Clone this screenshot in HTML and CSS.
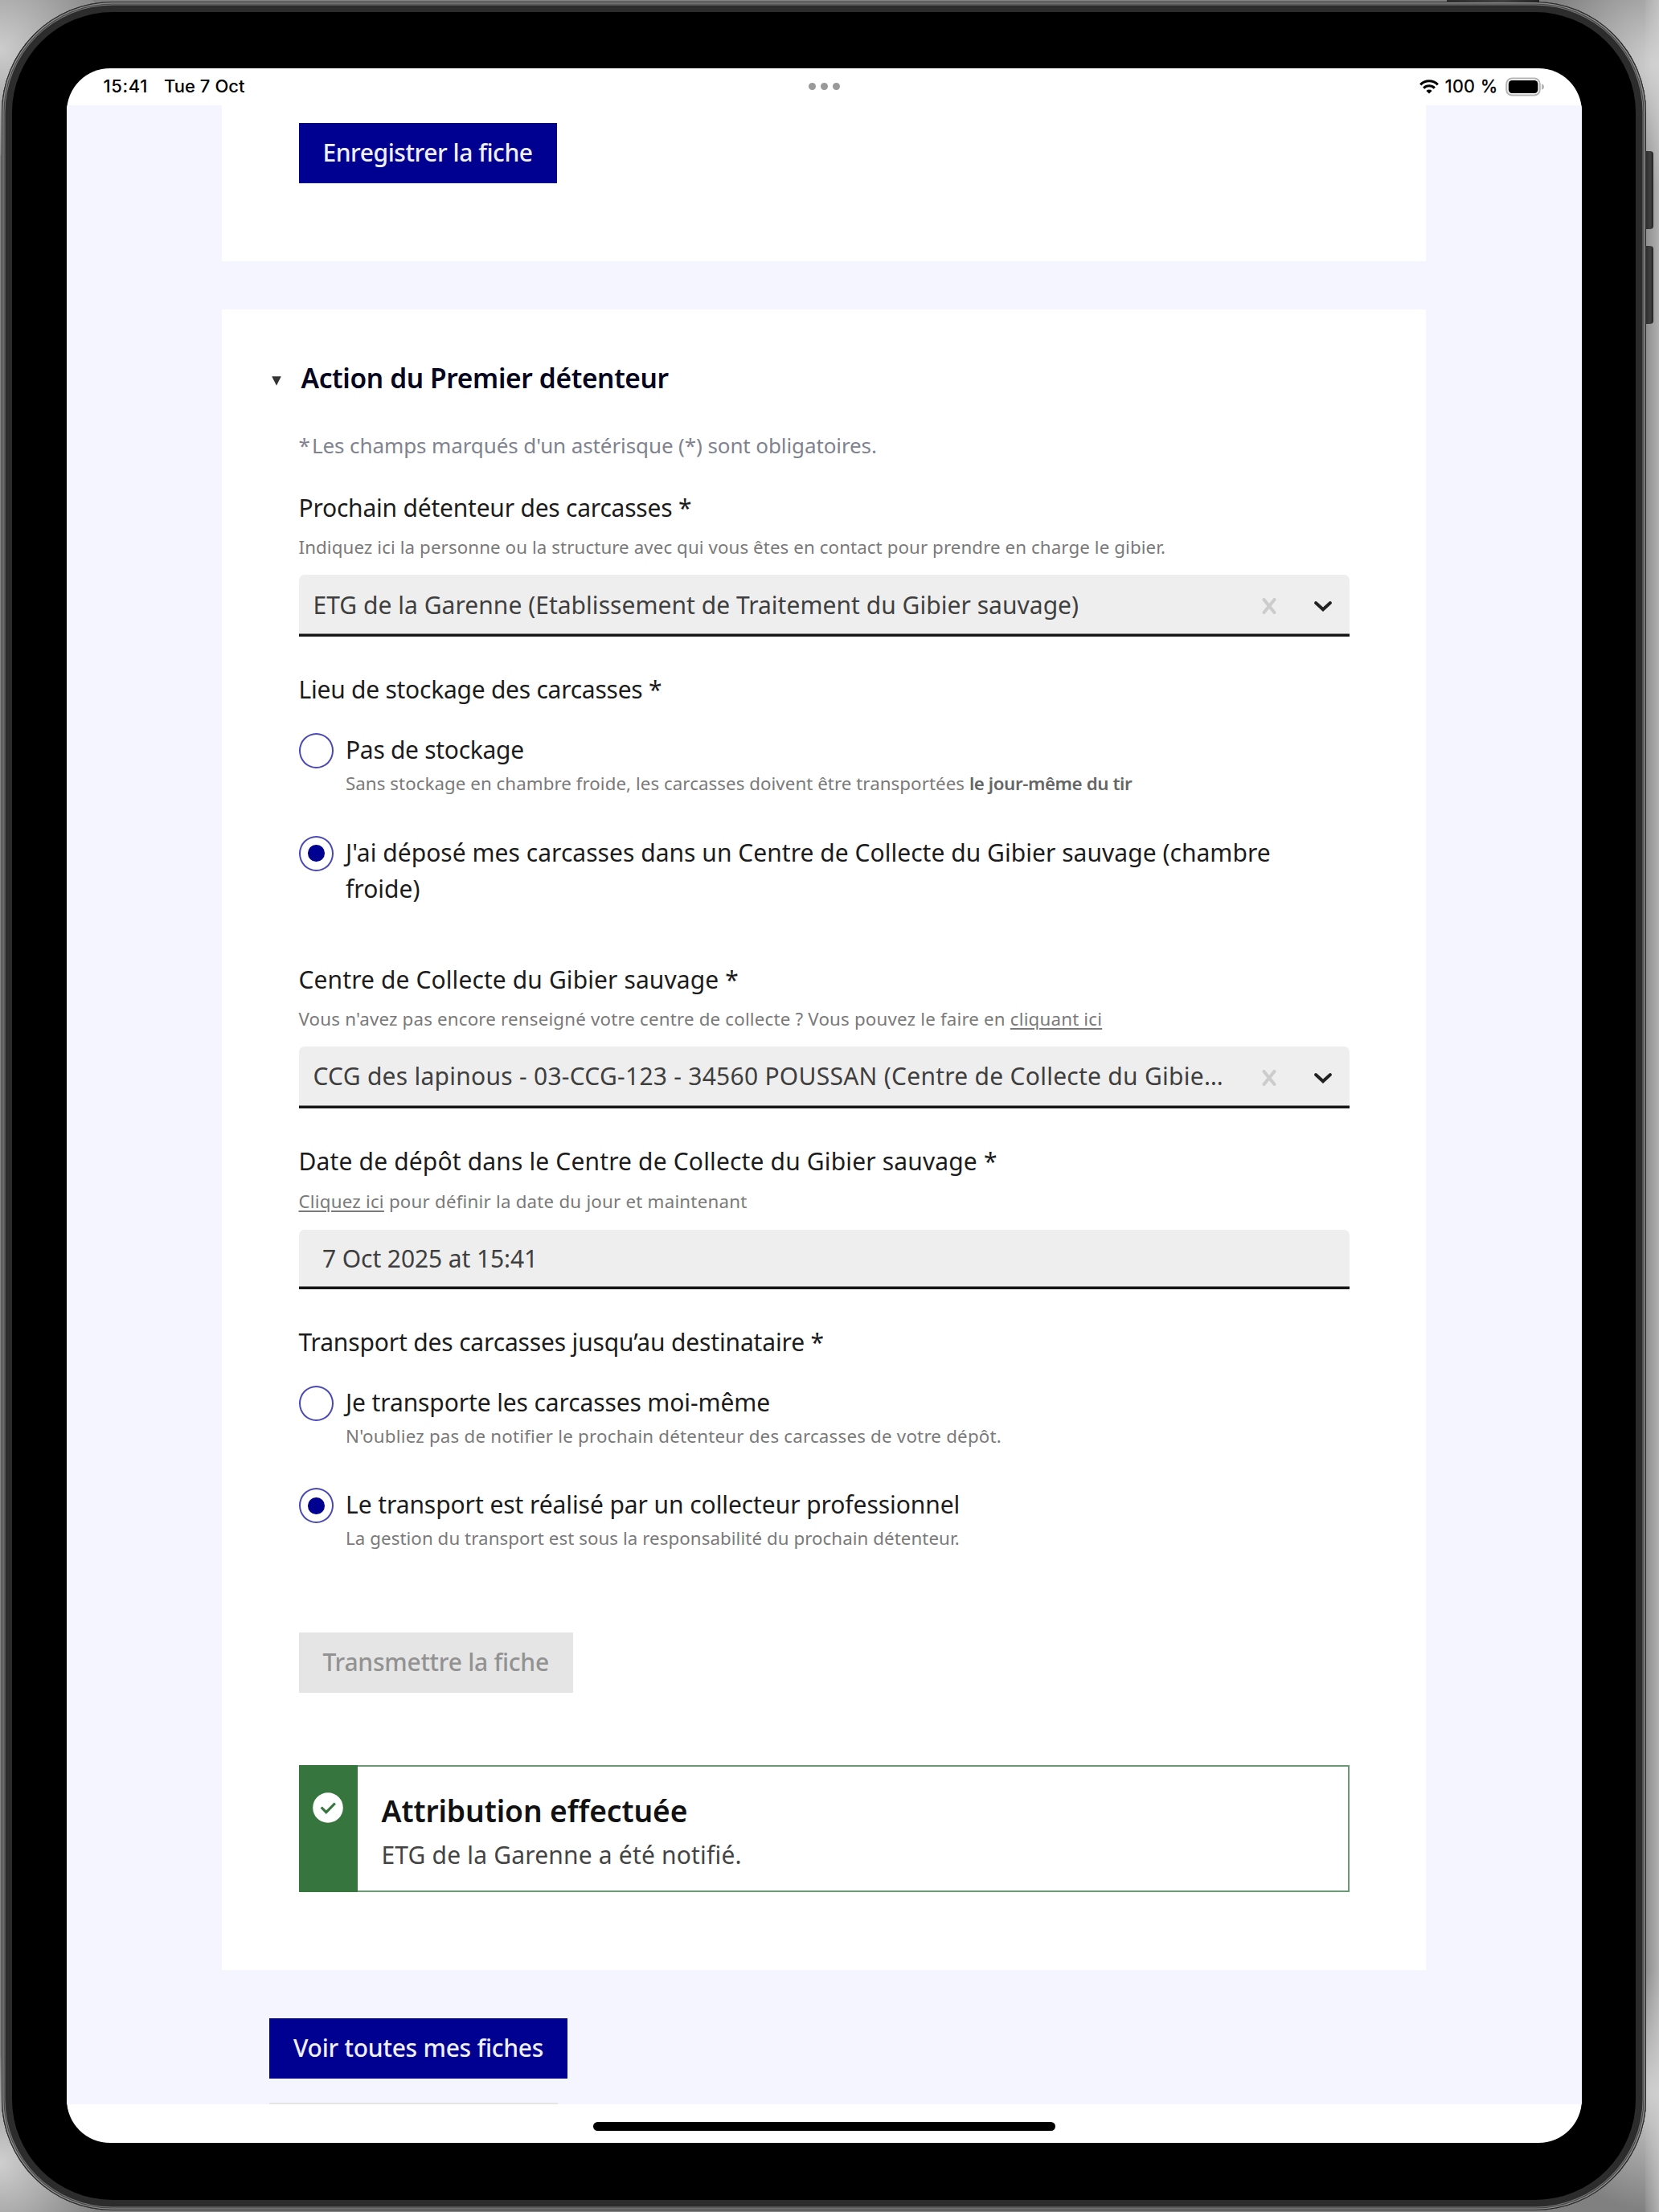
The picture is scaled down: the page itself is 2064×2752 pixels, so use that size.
FILE: index.html
```html
<!DOCTYPE html>
<html lang="fr">
<head>
<meta charset="utf-8">
<title>Action du Premier détenteur</title>
<link rel="stylesheet" href="styles.css">
</head>
<body>
<div class="stage">
  <span class="hw hw-top"></span>
  <span class="hw hw-vol-up"></span>
  <span class="hw hw-vol-down"></span>
  <div class="device">
    <div class="screen">
      <header class="status">
        <div class="status-left"><span class="time">15:41</span><span class="date">Tue 7 Oct</span></div>
        <div class="dots"><i></i><i></i><i></i></div>
        <div class="status-right">
          <svg class="wifi" viewBox="0 0 24 19" width="24" height="19"><g fill="none" stroke="#000" stroke-width="3.1"><path d="M1.2 7.3a15.2 15.2 0 0 1 21.6 0"/><path d="M5.2 11.6a9.6 9.6 0 0 1 13.6 0"/></g><path d="M12 18.6l-3.6-3.7a5.2 5.2 0 0 1 7.2 0z"/></svg>
          <span class="pct">100 %</span>
          <svg class="battery" viewBox="0 0 49 24" width="49" height="24"><rect x="1.2" y="1.4" width="41.6" height="21.2" rx="7" fill="none" stroke="#b5b5b5" stroke-width="2"/><rect x="3.8" y="4" width="36.6" height="16" rx="4.4"/><path d="M45 8.5c2.6.6 3 2 3 3.5s-.4 2.900-3 3.500z" fill="#b5b5b5"/></svg>
        </div>
      </header>

      <main class="page">
        <section class="card card-first">
          <button class="btn btn-primary t-save">Enregistrer la fiche</button>
        </section>

        <section class="card card-main">
          <div class="summary">
            <svg class="marker" viewBox="0 0 12 12" width="12" height="12"><path d="M.2.300h11.600L6 11.800z" fill="#333"/></svg>
            <h2>Action du Premier détenteur</h2>
          </div>
          <p class="required"><span class="star">*</span> Les champs marqués d'un astérisque (*) sont obligatoires.</p>

          <div class="field">
            <label class="label t-next">Prochain détenteur des carcasses *</label>
            <p class="hint t-next-hint">Indiquez ici la personne ou la structure avec qui vous êtes en contact pour prendre en charge le gibier.</p>
            <div class="select">
              <span class="value t-etg">ETG de la Garenne (Etablissement de Traitement du Gibier sauvage)</span>
              <svg class="clear" viewBox="0 0 18 20" width="18" height="20"><path d="M2.500 2l13 16M15.500 2l-13 16" stroke="#ccc" stroke-width="4" stroke-linecap="round"/></svg>
              <svg class="chevron" viewBox="0 0 24 16" width="24" height="16"><path d="M3 4L12 12.300l9-8.300" fill="none" stroke="#222" stroke-width="3.900" stroke-linecap="round"/></svg>
            </div>
          </div>

          <fieldset class="group group-storage">
            <legend class="label t-storage">Lieu de stockage des carcasses *</legend>
            <div class="radio">
              <span class="circle"></span>
              <div><p class="label t-none">Pas de stockage</p>
              <p class="hint t-none-hint">Sans stockage en chambre froide, les carcasses doivent être transportées <b>le jour-même du tir</b></p></div>
            </div>
            <div class="radio">
              <span class="circle checked"></span>
              <div><p class="label t-ccg">J'ai déposé mes carcasses dans un Centre de Collecte du Gibier sauvage (chambre froide)</p></div>
            </div>
          </fieldset>

          <div class="field field-ccg">
            <label class="label t-center">Centre de Collecte du Gibier sauvage *</label>
            <p class="hint t-center-hint">Vous n'avez pas encore renseigné votre centre de collecte ? Vous pouvez le faire en <u>cliquant ici</u></p>
            <div class="select">
              <span class="value t-lapinous">CCG des lapinous - 03-CCG-123 - 34560 POUSSAN (Centre de Collecte du Gibie…</span>
              <svg class="clear" viewBox="0 0 18 20" width="18" height="20"><path d="M2.500 2l13 16M15.500 2l-13 16" stroke="#ccc" stroke-width="4" stroke-linecap="round"/></svg>
              <svg class="chevron" viewBox="0 0 24 16" width="24" height="16"><path d="M3 4L12 12.300l9-8.300" fill="none" stroke="#222" stroke-width="3.900" stroke-linecap="round"/></svg>
            </div>
          </div>

          <div class="field field-date">
            <label class="label t-date">Date de dépôt dans le Centre de Collecte du Gibier sauvage *</label>
            <p class="hint t-date-hint"><u>Cliquez ici</u> pour définir la date du jour et maintenant</p>
            <div class="input"><span class="value t-value">7 Oct 2025 at 15:41</span></div>
          </div>

          <fieldset class="group">
            <legend class="label t-transport">Transport des carcasses jusqu’au destinataire *</legend>
            <div class="radio">
              <span class="circle"></span>
              <div><p class="label t-self">Je transporte les carcasses moi-même</p>
              <p class="hint t-self-hint">N'oubliez pas de notifier le prochain détenteur des carcasses de votre dépôt.</p></div>
            </div>
            <div class="radio">
              <span class="circle checked"></span>
              <div><p class="label t-pro">Le transport est réalisé par un collecteur professionnel</p>
              <p class="hint t-pro-hint">La gestion du transport est sous la responsabilité du prochain détenteur.</p></div>
            </div>
          </fieldset>

          <button class="btn btn-disabled t-send" disabled>Transmettre la fiche</button>

          <div class="alert">
            <div class="alert-band"><svg viewBox="0 0 38 38" width="38" height="38"><circle cx="19" cy="19" r="18.800" fill="#fff"/><path d="M10.700 18.500l6.100 6.200 11-11.200" fill="none" stroke="#37753f" stroke-width="3.200"/></svg></div>
            <div class="alert-body">
              <h3>Attribution effectuée</h3>
              <p>ETG de la Garenne a été notifié.</p>
            </div>
          </div>
        </section>

        <div class="actions">
          <button class="btn btn-primary t-all">Voir toutes mes fiches</button>
          <div class="btn-disabled next-action"></div>
        </div>
      </main>

      <footer class="home"><span></span></footer>
    </div>
  </div>
</div>
</body>
</html>
```
FILE: styles.css
```css
* { box-sizing: border-box; }
body { margin: 0; font-family: "Noto Sans", "Open Sans", sans-serif; }
p, h2, h3, fieldset, legend { margin: 0; padding: 0; border: 0; }

/* Tablet frame */
.stage {
  position: relative;
  width: 2064px; height: 2752px;
  padding: 2px 0 0 2px;
  overflow: hidden;
  background:
    radial-gradient(circle at 0 62px, #cdcdcd 0, #8c8c8c 130px, transparent 132px) 0 0 / 200px 200px no-repeat,
    radial-gradient(circle at 100% 80px, #d2d2d2 0, rgba(143, 143, 143, 0) 150px) 100% 0 / 200px 240px no-repeat,
    radial-gradient(circle at 0 138px, #cfcfcf 0, #868686 130px, transparent 132px) 0 100% / 200px 200px no-repeat,
    radial-gradient(circle at 100% 150px, #cfcfcf 0, rgba(134, 134, 134, 0) 150px) 100% 100% / 200px 300px no-repeat,
    linear-gradient(90deg, #808080 0, #808080 2046px, #8e8e8e 2048px, #b0b0b0 2064px);
}
.device {
  width: 2046px; height: 2748px;
  padding: 82.5px 0 0 81px;
  border-radius: 138px;
  background: #000;
  box-shadow: inset 0 0 0 1px #222, inset 0 0 0 2.500px #8a8a8a, inset 0 0 0 3.500px #444, inset 0 0 0 4.500px #777, inset 0 0 0 13px #2c2c2c;
}
.hw { position: absolute; background: linear-gradient(90deg, #2a2a2a, #404040 60%, #222); }
.hw-top { left: 1800px; top: 0; width: 115px; height: 3px; }
.hw-vol-up { left: 2047px; top: 188px; width: 10px; height: 97px; border-radius: 0 4px 4px 0; }
.hw-vol-down { left: 2047px; top: 306px; width: 10px; height: 97px; border-radius: 0 4px 4px 0; }

.screen {
  display: flex; flex-direction: column;
  width: 1884.700px; height: 2581px;
  border-radius: 54px;
  overflow: hidden;
  background: #fff;
}

/* Status bar */
.status {
  display: grid; grid-template-columns: 1fr auto 1fr;
  align-items: center;
  height: 46px;
  padding: 0 46px 0 45.500px;
  font: 500 22px/45px Inter, sans-serif;
  color: #000;
}
.status-left { display: flex; gap: 20px; letter-spacing: .05px; }
.time { letter-spacing: .6px; }
.dots { display: flex; gap: 6px; }
.dots i { width: 9px; height: 9px; border-radius: 50%; background: #999; }
.status-right { display: flex; align-items: center; justify-content: flex-end; }
.pct { margin: 0 9px 0 8px; font-weight: 400; letter-spacing: .3px; -webkit-text-stroke: .3px #000; }

/* Page */
.page { height: 2487.500px; flex: none; overflow: hidden; background: #f4f5fe; }
.card { width: 1498px; margin-left: 193px; padding: 0 95.500px; background: #fff; }
.card-first { height: 194.500px; padding-top: 22.500px; }
.card-main { height: 2066px; margin-top: 60px; padding-top: 59px; }
.actions { padding: 60px 0 0 252px; }

.btn {
  display: block; height: 75px; padding: 0 30px 2px; border: 0;
  font: 500 30px/73px "Noto Sans", sans-serif;
  white-space: nowrap;
}
.btn-primary { background: #000091; color: #f0f0fb; }
.btn-disabled { background: #e5e5e5; color: #929292; }
.t-save { letter-spacing: -.45px; }
.t-all { letter-spacing: -.25px; }
.t-send { margin-top: 98.400px; letter-spacing: -.25px; }
.next-action { width: 358.500px; height: 75px; margin-top: 30px; }

.summary { display: flex; align-items: center; margin-left: -33.500px; height: 52px; }
.marker { margin: 8px 24.500px 0 0; }
h2 { font-size: 33.500px; line-height: 52px; font-weight: 600; letter-spacing: -.36px; color: #06061e; }
.required { margin-top: 35.500px; font-size: 26px; line-height: 45px; letter-spacing: -.1px; color: #80838f; }
.star { letter-spacing: -4.500px; }

.label { display: block; font-size: 30px; line-height: 45px; color: #1c1c1c; }
.hint { font-size: 22.300px; line-height: 37px; color: #7a7a7a; white-space: nowrap; }
.hint b { font-weight: 600; letter-spacing: -.4px; color: #666; }
u { text-underline-offset: 3px; text-decoration-thickness: 2px; }

.field { margin-top: 32.200px; }
.field .hint { margin-top: 8.800px; }
.field-ccg { margin-top: 68px; }
.field-date { margin-top: 43.700px; }

.select, .input {
  display: flex; align-items: center;
  width: 1307.500px;
  background: #eee;
  border-radius: 7px 7px 0 0;
  box-shadow: inset 0 -3.500px #161616;
  color: #3f3f3f; font-size: 30px;
}
.select { height: 76.500px; margin-top: 15.900px; padding: 0 21px 3px 18px; }
.input { height: 74px; margin-top: 16.600px; padding: 0 29.500px 3.500px; }
.select .value { flex: 1; white-space: nowrap; }
.clear { margin: 4px 46px 0 0; }
.chevron { margin-top: 4px; }

.group { margin-top: 43.400px; }
.group legend { display: block; float: left; width: 100%; }
.group legend + .radio { clear: both; padding-top: 30px; }
.radio { display: flex; gap: 15px; }
.radio + .radio { margin-top: 44.400px; }
.radio .hint { margin-top: .9px; }
.circle {
  flex: none; display: flex; align-items: center; justify-content: center;
  width: 43.500px; height: 44px; margin-top: 2px;
  border: 2px solid #4a4ab2; border-radius: 50%;
}
.checked::after { content: ""; width: 20.500px; height: 20.500px; border-radius: 50%; background: #000091; }

/* Success alert */
.alert { display: flex; width: 1307.500px; height: 158px; margin-top: 90px; border: 2px solid #6a9a74; border-left: 0; }
.alert-band { width: 73px; margin: -2px 0; padding: 34px 0 0 17.500px; background: #37753f; }
.alert-body { padding: 27px 0 0 30px; }
h3 { font-size: 37.200px; line-height: 56px; font-weight: 600; letter-spacing: -.1px; color: #111; }
.alert-body p { margin-top: 4px; font-size: 30px; line-height: 45px; letter-spacing: .18px; color: #444; }

/* Tracking per text */
.t-next { letter-spacing: -.22px; }
.t-next-hint { letter-spacing: .1px; }
.t-etg { letter-spacing: .03px; }
.t-storage { letter-spacing: -.25px; }
.t-none { letter-spacing: -.3px; }
.t-none-hint { letter-spacing: .06px; }
.t-ccg { letter-spacing: .03px; }
.t-center { letter-spacing: .1px; }
.t-center-hint { letter-spacing: .19px; }
.t-lapinous { letter-spacing: .26px; }
.t-date { letter-spacing: .15px; }
.t-date-hint { letter-spacing: .22px; }
.t-value { letter-spacing: -.1px; }
.t-transport { letter-spacing: -.16px; }
.t-self { letter-spacing: -.12px; }
.t-self-hint { letter-spacing: .22px; }
.t-pro { letter-spacing: -.08px; }
.t-pro-hint { letter-spacing: .07px; }

/* Home indicator */
.home { flex: 1; padding: 22px 0 0 655px; }
.home span { display: block; width: 575px; height: 10.500px; border-radius: 6px; background: #000; }
```
